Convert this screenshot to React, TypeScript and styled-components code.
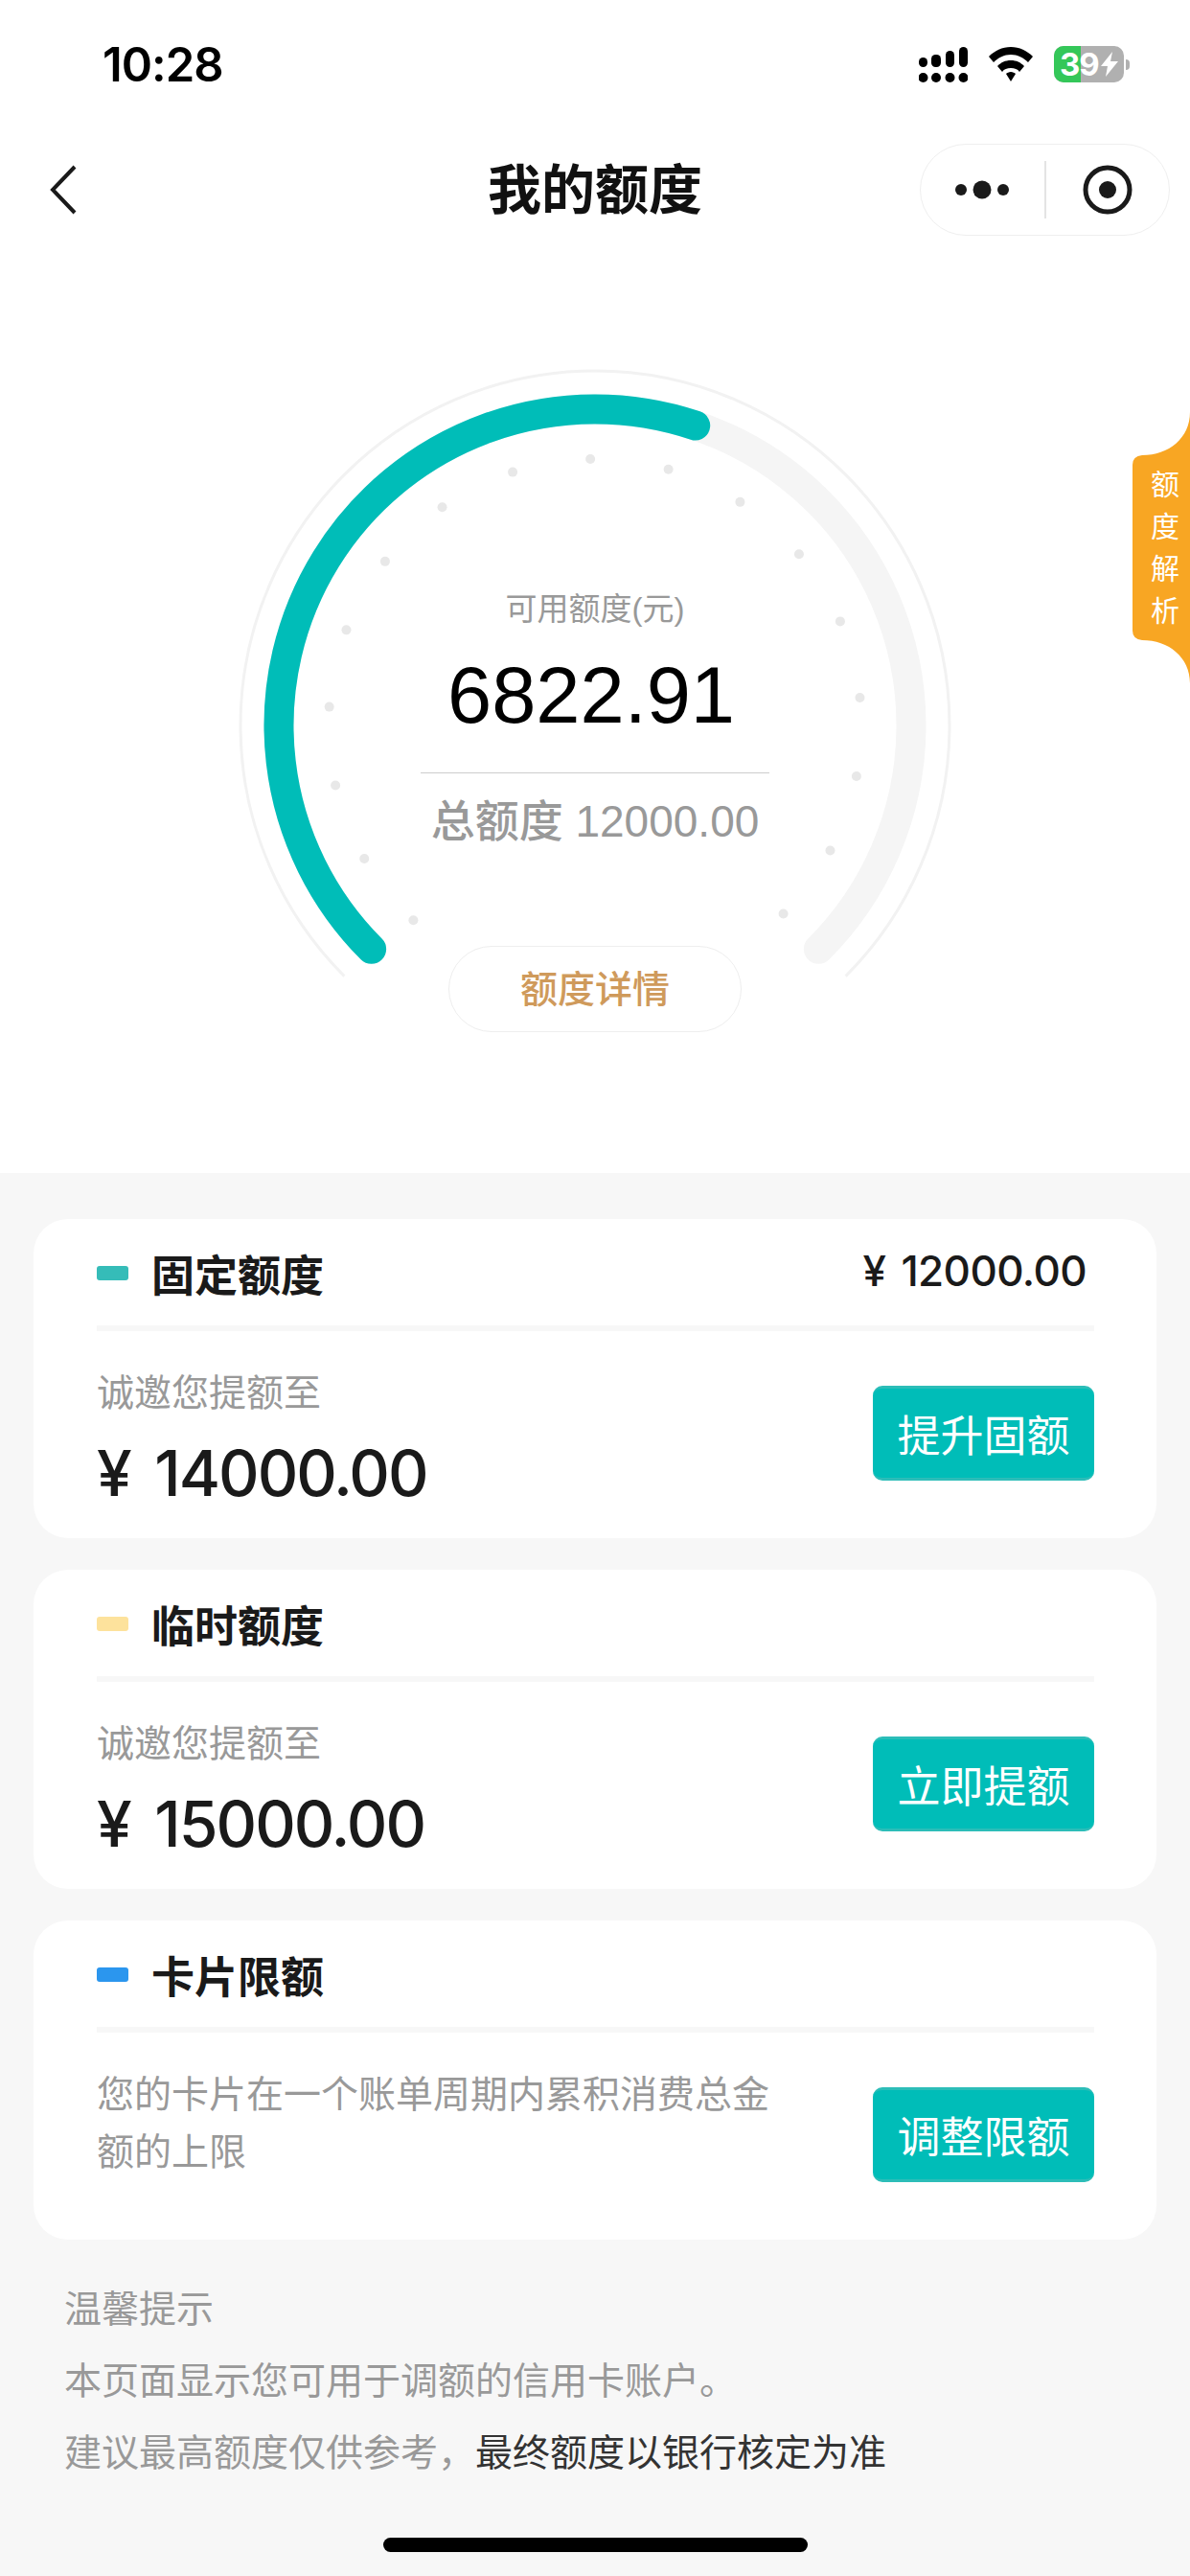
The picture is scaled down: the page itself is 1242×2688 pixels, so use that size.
import React from "react";
import styled, { createGlobalStyle } from "styled-components";

const CX = 390;
const CY = 380;
const DOT_ANGLES = [-91, -74, -57, -40, -23, -6, 11, 28, 45, -108, -125, -142, -159, -176, 167, 150, 133];

const polar = (r: number, deg: number) => {
	const a = (deg * Math.PI) / 180;
	return { x: CX + r * Math.cos(a), y: CY + r * Math.sin(a) };
};

const arc = (r: number, from: number, to: number) => {
	const a = polar(r, from);
	const b = polar(r, to);
	const sweep = to - from;
	return `M${a.x} ${a.y} A${r} ${r} 0 ${sweep > 180 ? 1 : 0} 1 ${b.x} ${b.y}`;
};

const cards = [
	{
		title: "固定额度",
		mark: "#35bcb8",
		right: "¥ 12000.00",
		label: "诚邀您提额至",
		amount: "¥ 14000.00",
		action: "提升固额",
	},
	{
		title: "临时额度",
		mark: "#fde29c",
		label: "诚邀您提额至",
		amount: "¥ 15000.00",
		action: "立即提额",
	},
	{
		title: "卡片限额",
		mark: "#2b96ee",
		note: "您的卡片在一个账单周期内累积消费总金额的上限",
		action: "调整限额",
	},
];

const App = () => {
	return (
		<>
			<GlobalStyle />
			<Page>
				<Hero>
					<StatusBar>
						<Time>10:28</Time>
						<StatusIcons>
							<svg width="51" height="37" viewBox="0 0 51 37">
								<g fill="#000">
									<rect x="0" y="11" width="9" height="10" rx="4.5" />
									<rect x="13" y="8" width="10" height="13" rx="4.5" />
									<rect x="28" y="4" width="9" height="17" rx="4.5" />
									<rect x="42" y="0" width="9" height="21" rx="4.5" />
									<circle cx="4.5" cy="32" r="5" />
									<circle cx="18" cy="32" r="5" />
									<circle cx="32.5" cy="32" r="5" />
									<circle cx="46.5" cy="32" r="5" />
								</g>
							</svg>
							<svg width="46" height="36" viewBox="0 0 46 36">
								<path d="M23 0C14 0 6 4 0 10l5 6c5-5 11-8 18-8s13 3 18 8l5-6C40 4 32 0 23 0z" />
								<path d="M23 14c-6 0-10 2-14 6l5 6c2-3 5-4 9-4s7 1 9 4l5-6c-4-4-8-6-14-6z" />
								<path d="M23 26c-2 0-4 1-5 2l5 8 5-8c-1-1-3-2-5-2z" />
							</svg>
							<Battery>
								<BatteryLevel />
								<BatteryText>39</BatteryText>
								<svg width="18" height="26" viewBox="0 0 18 26">
									<path d="M12 0L0 15h7L5 26 18 10h-8z" fill="#fff" />
								</svg>
								<BatteryTip />
							</Battery>
						</StatusIcons>
					</StatusBar>

					<NavBar>
						<BackButton>
							<svg width="30" height="54" viewBox="0 0 30 54">
								<path d="M27 3L4 27l23 24" fill="none" stroke="#1a1a1a" strokeWidth="4" />
							</svg>
						</BackButton>
						<Title>我的额度</Title>
						<Capsule>
							<CapsuleSide>
								<svg width="56" height="20" viewBox="0 0 56 20">
									<circle cx="6" cy="10" r="6" fill="#1a1a1a" />
									<circle cx="28" cy="10" r="9.5" fill="#1a1a1a" />
									<circle cx="50" cy="10" r="6" fill="#1a1a1a" />
								</svg>
							</CapsuleSide>
							<CapsuleLine />
							<CapsuleSide>
								<svg width="52" height="52" viewBox="0 0 52 52">
									<circle cx="26" cy="26" r="23" fill="none" stroke="#1a1a1a" strokeWidth="5" />
									<circle cx="26" cy="26" r="9" fill="#1a1a1a" />
								</svg>
							</CapsuleSide>
						</Capsule>
					</NavBar>

					<Gauge>
						<GaugeArt width="780" height="720" viewBox="0 0 780 720">
							<path d={arc(370, 135, 405)} fill="none" stroke="#f2f2f2" strokeWidth="3" />
							<path d={arc(330, 135, 405)} fill="none" stroke="#f5f5f5" strokeWidth="31" strokeLinecap="round" />
							<path d={arc(330, 135, 288.5)} fill="none" stroke="#00bdb8" strokeWidth="31" strokeLinecap="round" />
							{DOT_ANGLES.map((deg) => {
								const p = polar(278, deg);
								return <circle key={deg} cx={p.x} cy={p.y} r="5" fill="#e8e8e8" />;
							})}
						</GaugeArt>
						<GaugeText>
							<GaugeLabel>可用额度(元)</GaugeLabel>
							<GaugeValue>6822.91</GaugeValue>
							<GaugeTotal>总额度 12000.00</GaugeTotal>
							<DetailButton>额度详情</DetailButton>
						</GaugeText>
					</Gauge>

					<SideTab>
						<svg width="60" height="283" viewBox="0 0 60 283">
							<path
								d="M60 0C60 27 38 45 10 45Q0 46 0 55V228Q0 237 10 238C38 238 60 256 60 283Z"
								fill="#f8a623"
							/>
						</svg>
						<SideTabText>
							<span>额</span>
							<span>度</span>
							<span>解</span>
							<span>析</span>
						</SideTabText>
					</SideTab>
				</Hero>

				<Cards>
					{cards.map((card) => (
						<Card key={card.title}>
							<CardHeader>
								<Mark $color={card.mark} />
								<CardTitle>{card.title}</CardTitle>
								{card.right && <CardRight>{card.right}</CardRight>}
							</CardHeader>
							<CardBody>
								{card.note ? (
									<Note>{card.note}</Note>
								) : (
									<AmountBlock>
										<CardLabel>{card.label}</CardLabel>
										<CardAmount>{card.amount}</CardAmount>
									</AmountBlock>
								)}
								<ActionButton>{card.action}</ActionButton>
							</CardBody>
						</Card>
					))}
				</Cards>

				<Tips>
					<p>温馨提示</p>
					<p>本页面显示您可用于调额的信用卡账户。</p>
					<p>
						建议最高额度仅供参考，<strong>最终额度以银行核定为准</strong>
					</p>
				</Tips>
				<HomeBar />
			</Page>
		</>
	);
};

export default App;

const GlobalStyle = createGlobalStyle`
	html, body {
		margin: 0;
		padding: 0;
	}
	body {
		font-family: "Liberation Sans", "Noto Sans CJK SC", sans-serif;
	}
`;

const Page = styled.div`
	position: relative;
	width: 1242px;
	height: 2688px;
	overflow: hidden;
	background-color: #f7f7f7;
`;

const Hero = styled.div`
	position: relative;
	height: 1224px;
	background-color: white;
`;

const StatusBar = styled.div`
	height: 134px;
	display: flex;
	align-items: center;
	justify-content: space-between;
	padding: 0 69px 0 107px;
	box-sizing: border-box;
`;

const Time = styled.div`
	font-family: Inter, sans-serif;
	font-size: 49px;
	font-weight: 600;
	color: #000;
	letter-spacing: -1px;
`;

const StatusIcons = styled.div`
	display: flex;
	align-items: center;
	gap: 22px;
`;

const Battery = styled.div`
	position: relative;
	width: 73px;
	height: 38px;
	box-sizing: border-box;
	padding-left: 6px;
	border-radius: 10px;
	background-color: #b0b0b0;
	display: flex;
	align-items: center;
	gap: 2px;
`;

const BatteryLevel = styled.div`
	position: absolute;
	left: 0;
	top: 0;
	bottom: 0;
	width: 28px;
	border-radius: 10px 0 0 10px;
	background-color: #34c759;
`;

const BatteryText = styled.span`
	position: relative;
	font-family: Inter, sans-serif;
	font-size: 33px;
	font-weight: 700;
	letter-spacing: -1px;
	color: white;
`;

const BatteryTip = styled.div`
	position: absolute;
	right: -6px;
	top: 14px;
	width: 4px;
	height: 11px;
	border-radius: 0 4px 4px 0;
	background-color: #b0b0b0;
`;

const NavBar = styled.div`
	height: 128px;
	display: grid;
	grid-template-columns: 1fr auto 1fr;
	align-items: center;
	padding: 0 21px;
`;

const BackButton = styled.div`
	display: flex;
	margin-left: 30px;
`;

const Title = styled.div`
	font-size: 56px;
	font-weight: 700;
	margin-top: -9px;
	color: #111;
`;

const Capsule = styled.div`
	justify-self: end;
	width: 261px;
	height: 96px;
	box-sizing: border-box;
	border: 1px solid #efefef;
	border-radius: 48px;
	display: flex;
	align-items: center;
`;

const CapsuleSide = styled.div`
	flex: 1;
	display: flex;
	justify-content: center;
	align-items: center;
`;

const CapsuleLine = styled.div`
	width: 2px;
	height: 60px;
	background-color: #e4e4e4;
`;

const Gauge = styled.div`
	display: grid;
	justify-content: center;
	margin-top: 115px;
`;

const GaugeArt = styled.svg`
	grid-area: 1 / 1;
`;

const GaugeText = styled.div`
	grid-area: 1 / 1;
	display: flex;
	flex-direction: column;
	align-items: center;
	padding-top: 237px;
`;

const GaugeLabel = styled.div`
	font-size: 33px;
	line-height: 44px;
	color: #999;
`;

const GaugeValue = styled.div`
	font-size: 83px;
	line-height: 96px;
	margin: 20px 8px 0 0;
	color: #000;
`;

const GaugeTotal = styled.div`
	width: 364px;
	margin-top: 32px;
	padding-top: 24px;
	border-top: 1px solid #ccc;
	font-size: 46px;
	line-height: 52px;
	font-weight: 500;
	color: #999;
	text-align: center;
	white-space: nowrap;
`;

const DetailButton = styled.div`
	width: 306px;
	height: 90px;
	margin-top: 104px;
	padding-bottom: 6px;
	box-sizing: border-box;
	border: 1px solid #eee;
	border-radius: 45px;
	background-color: white;
	display: flex;
	align-items: center;
	justify-content: center;
	font-size: 39px;
	font-weight: 500;
	color: #cf9a5b;
`;

const SideTab = styled.div`
	position: absolute;
	right: 0;
	top: 430px;
	width: 60px;
	height: 283px;

	svg {
		display: block;
	}
`;

const SideTabText = styled.div`
	position: absolute;
	top: 54px;
	left: 19px;
	display: flex;
	flex-direction: column;
	font-size: 30px;
	line-height: 44px;
	color: white;
`;

const Cards = styled.div`
	display: flex;
	flex-direction: column;
	gap: 33px;
	padding: 48px 35px 0;
`;

const Card = styled.div`
	height: 333px;
	padding: 0 65px 0 66px;
	border-radius: 36px;
	background-color: white;
	display: flex;
	flex-direction: column;
`;

const CardHeader = styled.div`
	height: 111px;
	flex: none;
	box-sizing: border-box;
	padding-top: 2px;
	display: flex;
	align-items: center;
	gap: 24px;
`;

const Mark = styled.div<{ $color: string }>`
	width: 33px;
	height: 15px;
	border-radius: 3px;
	background-color: ${(p) => p.$color};
`;

const CardTitle = styled.div`
	flex: 1;
	font-size: 45px;
	font-weight: 700;
	color: #1a1a1a;
`;

const CardRight = styled.div`
	font-family: Inter, sans-serif;
	font-size: 44px;
	font-weight: 500;
	letter-spacing: -0.6px;
	word-spacing: 5px;
	margin: -6px 8px 0 0;
	color: #1a1a1a;
`;

const CardBody = styled.div`
	flex: 1;
	border-top: 6px solid #f7f7f7;
	display: flex;
	align-items: center;
	justify-content: space-between;
`;

const AmountBlock = styled.div`
	padding-top: 10px;
`;

const CardLabel = styled.div`
	font-size: 39px;
	line-height: 54px;
	color: #999;
`;

const CardAmount = styled.div`
	font-family: Inter, sans-serif;
	font-size: 66px;
	font-weight: 500;
	line-height: 80px;
	letter-spacing: -2px;
	word-spacing: 10px;
	margin-top: 16px;
	color: #1a1a1a;
`;

const Note = styled.div`
	width: 710px;
	margin-bottom: 26px;
	font-size: 39px;
	line-height: 60px;
	color: #999;
`;

const ActionButton = styled.div`
	width: 231px;
	height: 99px;
	flex: none;
	margin-bottom: 4px;
	box-sizing: border-box;
	border-top: 3px solid #2cbdb8;
	border-bottom: 3px solid #2cbdb8;
	border-radius: 10px;
	background-color: #00bdb8;
	display: flex;
	align-items: center;
	justify-content: center;
	font-size: 45px;
	color: white;
`;

const Tips = styled.div`
	padding: 35px 67px 0;
	font-size: 39px;
	line-height: 75px;
	color: #999;

	p {
		margin: 0;
	}

	strong {
		font-weight: 400;
		color: #333;
	}
`;

const HomeBar = styled.div`
	width: 443px;
	height: 15px;
	margin: 51px auto 0;
	border-radius: 8px;
	background-color: #000;
`;
